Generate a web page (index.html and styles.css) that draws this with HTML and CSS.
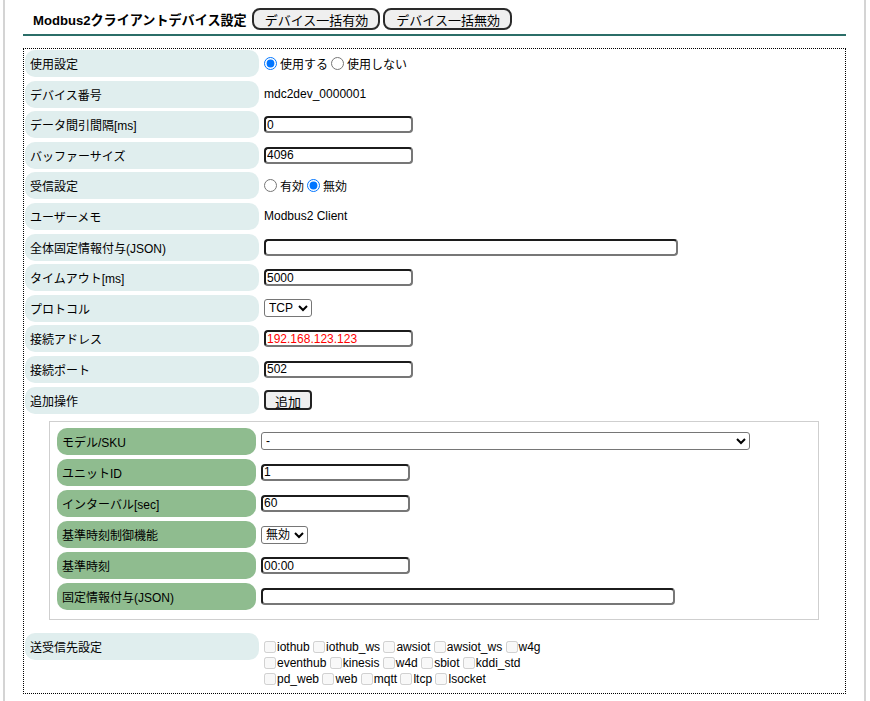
FILE: index.html
```html
<!DOCTYPE html>
<html lang="ja">
<head>
    <meta charset="UTF-8">
    <meta name="viewport" content="width=device-width, initial-scale=1.0">
    <title>Modbus2クライアントデバイス設定</title>
    <link rel="stylesheet" href="styles.css">
</head>
<body>
    <div class="page">
        <div class="page-header">
            <h1 class="title">Modbus2クライアントデバイス設定</h1>
            <button class="header-btn">デバイス一括有効</button>
            <button class="header-btn">デバイス一括無効</button>
        </div>

        <div class="settings">
            <div class="label">使用設定</div>
            <div class="value">
                <label><input type="radio" name="use" checked>使用する</label>
                <label><input type="radio" name="use">使用しない</label>
            </div>

            <div class="label">デバイス番号</div>
            <div class="value">mdc2dev_0000001</div>

            <div class="label">データ間引間隔[ms]</div>
            <div class="value"><input type="text" class="field" value="0"></div>

            <div class="label">バッファーサイズ</div>
            <div class="value"><input type="text" class="field" value="4096"></div>

            <div class="label">受信設定</div>
            <div class="value">
                <label><input type="radio" name="recv">有効</label>
                <label><input type="radio" name="recv" checked>無効</label>
            </div>

            <div class="label">ユーザーメモ</div>
            <div class="value">Modbus2 Client</div>

            <div class="label">全体固定情報付与(JSON)</div>
            <div class="value"><input type="text" class="field field-wide" value=""></div>

            <div class="label">タイムアウト[ms]</div>
            <div class="value"><input type="text" class="field" value="5000"></div>

            <div class="label">プロトコル</div>
            <div class="value">
                <select class="pick"><option>TCP</option><option>UDP</option></select>
            </div>

            <div class="label">接続アドレス</div>
            <div class="value"><input type="text" class="field field-error" value="192.168.123.123"></div>

            <div class="label">接続ポート</div>
            <div class="value"><input type="text" class="field" value="502"></div>

            <div class="label">追加操作</div>
            <div class="value"><button class="add-btn">追加</button></div>

            <div class="unit-box">
                <div class="label unit-label">モデル/SKU</div>
                <div class="value">
                    <select class="pick pick-wide"><option>-</option></select>
                </div>

                <div class="label unit-label">ユニットID</div>
                <div class="value"><input type="text" class="field" value="1"></div>

                <div class="label unit-label">インターバル[sec]</div>
                <div class="value"><input type="text" class="field" value="60"></div>

                <div class="label unit-label">基準時刻制御機能</div>
                <div class="value">
                    <select class="pick"><option>無効</option><option>有効</option></select>
                </div>

                <div class="label unit-label">基準時刻</div>
                <div class="value"><input type="text" class="field" value="00:00"></div>

                <div class="label unit-label">固定情報付与(JSON)</div>
                <div class="value"><input type="text" class="field field-wide" value=""></div>
            </div>

            <div class="label label-top">送受信先設定</div>
            <div class="targets">
                <label><input type="checkbox" disabled>iothub</label>
                <label><input type="checkbox" disabled>iothub_ws</label>
                <label><input type="checkbox" disabled>awsiot</label>
                <label><input type="checkbox" disabled>awsiot_ws</label>
                <label><input type="checkbox" disabled>w4g</label>
                <label><input type="checkbox" disabled>eventhub</label>
                <label><input type="checkbox" disabled>kinesis</label>
                <label><input type="checkbox" disabled>w4d</label>
                <label><input type="checkbox" disabled>sbiot</label>
                <label><input type="checkbox" disabled>kddi_std</label>
                <label><input type="checkbox" disabled>pd_web</label>
                <label><input type="checkbox" disabled>web</label>
                <label><input type="checkbox" disabled>mqtt</label>
                <label><input type="checkbox" disabled>ltcp</label>
                <label><input type="checkbox" disabled>lsocket</label>
            </div>
        </div>
    </div>
</body>
</html>
```

FILE: styles.css
```css
body {
    margin: 0;
    font-family: "Liberation Sans", "Noto Sans CJK JP", sans-serif;
    font-size: 12px;
    color: #000;
    background-color: #fff;
}

.page {
    margin: 0 4px 0 3px;
    min-height: 100vh;
    box-sizing: border-box;
    border-left: 2px solid #d4d4d4;
    border-right: 2px solid #d4d4d4;
    padding: 0 18px 0 18px;
}

.page-header {
    display: flex;
    align-items: center;
    padding: 8px 0 4px 10px;
    border-bottom: 2px solid #2b6e68;
}

.title {
    margin: 0 5px 0 0;
    font-size: 13.1px;
    font-weight: bold;
}

.header-btn {
    height: 22px;
    padding: 0 10px 0 11px;
    font-family: inherit;
    font-size: 13px;
    background-color: #efefef;
    border: 2px solid #2a2a2a;
    border-radius: 8px;
}

.header-btn + .header-btn {
    margin-left: 3px;
}

.settings {
    margin-top: 12px;
    border: 1px dotted #000;
    padding: 1px 1px 6px 1px;
    display: grid;
    grid-template-columns: 234px 1fr;
    column-gap: 5px;
    row-gap: 3.6px;
}

.label {
    background-color: #e0eeee;
    border-radius: 10px;
    min-height: 27px;
    box-sizing: border-box;
    padding: 0 5px;
    display: flex;
    align-items: center;
}

.label-top {
    align-self: start;
}

.value {
    display: flex;
    align-items: center;
}

.value label {
    display: inline-flex;
    align-items: center;
    margin-right: 3px;
}

.value input[type="radio"] {
    width: 13px;
    height: 13px;
    margin: 0 3px 0 0;
}

.field {
    box-sizing: border-box;
    width: 149px;
    height: 17px;
    padding: 0 1px;
    font-family: inherit;
    font-size: 12px;
    border-style: solid;
    border-width: 2px;
    border-color: #1c1c1c #777 #777 #1c1c1c;
    border-radius: 4px;
    outline: none;
}

.field-wide {
    width: 414px;
}

.field-error {
    color: #f00;
}

.pick {
    height: 18px;
    font-family: inherit;
    font-size: 12px;
    border: 1px solid #767676;
    border-radius: 3px;
    background-color: #fff;
    padding: 0;
}

.pick-wide {
    width: 489px;
}

.add-btn {
    width: 48px;
    height: 20px;
    padding: 0;
    font-family: inherit;
    font-size: 13px;
    background-color: #efefef;
    border: 2px solid #222;
    border-radius: 4px;
}

.unit-box {
    grid-column: 1 / 3;
    margin: 3.4px 25px 9.4px 24px;
    border: 1px solid #cfcfcf;
    padding: 6px 7px 9px 7px;
    display: grid;
    grid-template-columns: 199px 1fr;
    column-gap: 5px;
    row-gap: 4.2px;
}

.unit-label {
    background-color: #8fbc8f;
    min-height: 27px;
}

.targets {
    width: 290px;
    padding-top: 6px;
    line-height: 16px;
}

.targets label {
    display: inline-block;
    white-space: nowrap;
}

.targets input[type="checkbox"] {
    width: 12px;
    height: 12px;
    margin: 0 1px 0 0;
    vertical-align: -2px;
}
```
